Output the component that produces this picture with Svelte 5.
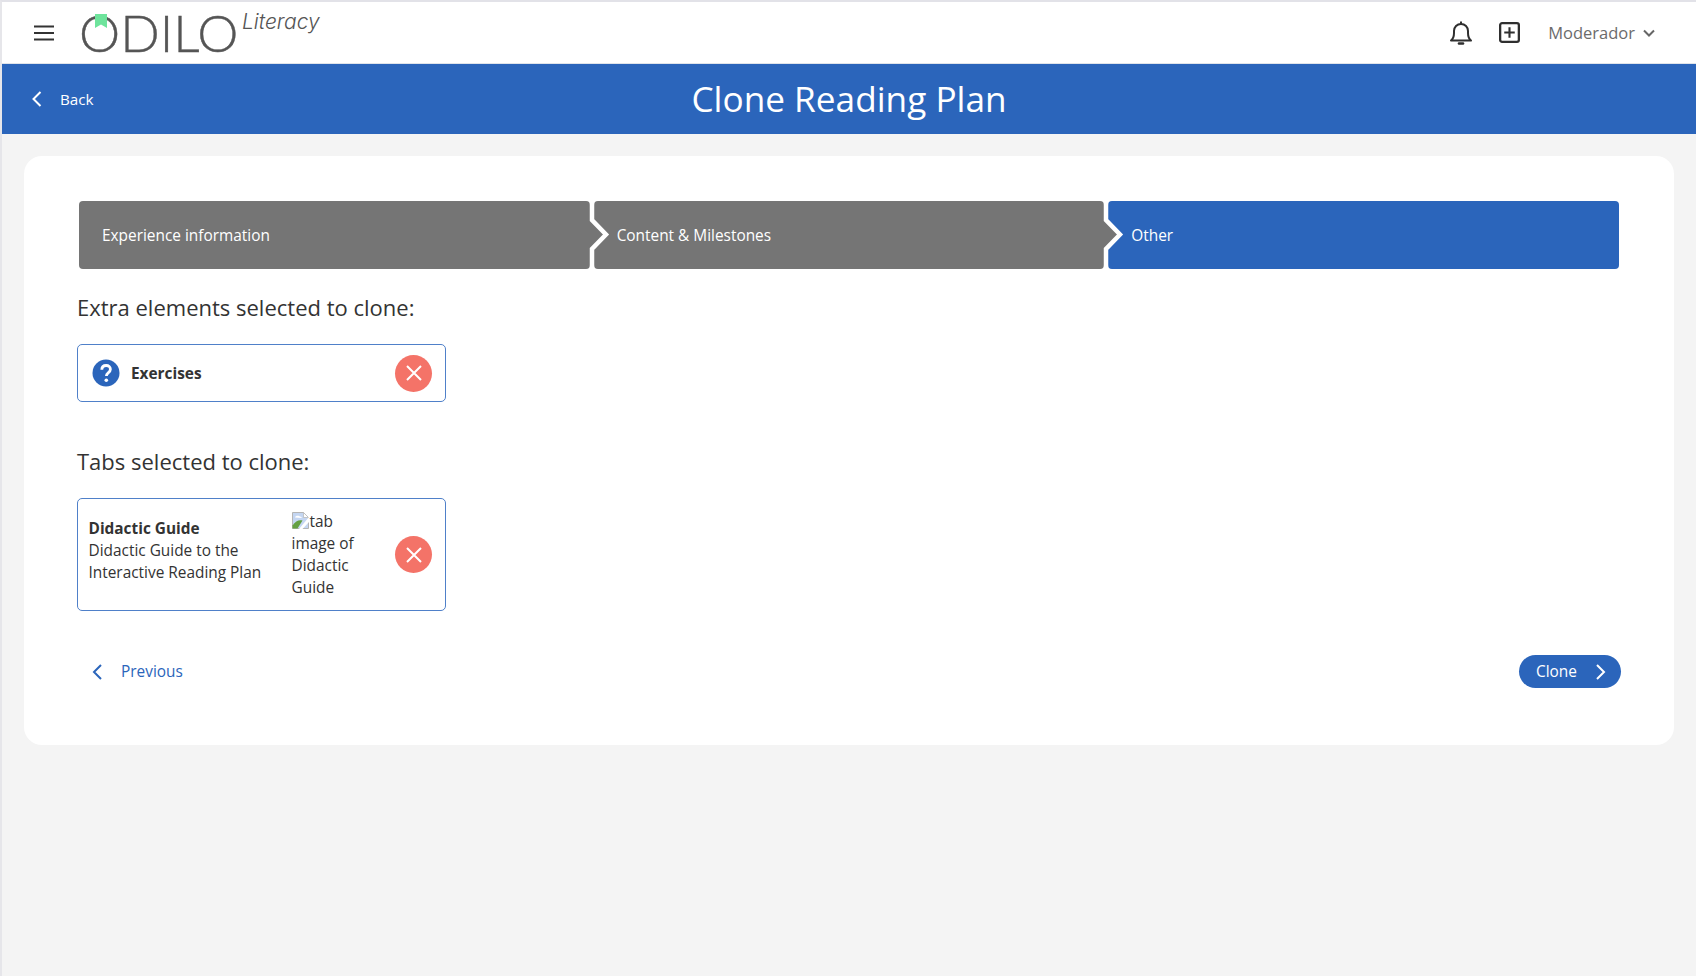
<script>
  const steps = [
    { label: 'Experience information', active: false },
    { label: 'Content & Milestones', active: false },
    { label: 'Other', active: true }
  ];
</script>

<div class="page">
  <header class="top">
    <button class="burger" aria-label="Menu">
      <svg width="22" height="18" viewBox="0 0 22 18"><path d="M1 2.500h20M1 9h20M1 15.500h20" stroke="#333" stroke-width="2.200" fill="none"/></svg>
    </button>
    <div class="logo">
      <span class="mark">ODILO</span>
      <svg class="ribbon" width="12" height="14" viewBox="0 0 12 14"><path d="M0 0h12v14l-6-3.500-6 3.500z" fill="#6ee49c"/></svg>
      <span class="lit">Literacy</span>
    </div>
    <div class="tools">
      <svg class="bell" width="24" height="26" viewBox="0 0 24 26" fill="none" stroke="#2f2f2f" stroke-width="2"><path d="M2 20.500c2.200-1.800 3-3.500 3-7.500V11c0-4 3-7 7-7s7 3 7 7v2c0 4 .8 5.700 3 7.500z" stroke-linejoin="round"/><path d="M12 1.500V4"/><path d="M10 23.500h4" stroke-width="2.600" stroke-linecap="round"/></svg>
      <svg class="plus" width="21" height="21" viewBox="0 0 22 22" fill="none" stroke="#2f2f2f"><rect x="1.200" y="1.200" width="19.600" height="19.600" rx="2" stroke-width="2.400"/><path d="M11 5.500v11M5.500 11h11" stroke-width="2.200"/></svg>
      <span class="user">Moderador</span>
      <svg width="12" height="8" viewBox="0 0 12 8" fill="none" stroke="#666" stroke-width="2"><path d="M1 1.500l5 5 5-5"/></svg>
    </div>
  </header>

  <div class="bar">
    <a class="back" href="#back">
      <svg width="11" height="16" viewBox="0 0 11 16" fill="none" stroke="#fff" stroke-width="2"><path d="M9.500 1L2.500 8l7 7"/></svg>
      <span>Back</span>
    </a>
    <h1>Clone Reading Plan</h1>
    <span></span>
  </div>

  <main class="card">
    <ol class="steps">
      {#each steps as s, i}
        <li class="step" class:active={s.active}>
          <span>{s.label}</span>
          {#if i < steps.length - 1}
            <svg class="arrow" width="24" height="68" viewBox="0 0 24 68"><path d="M0 15h5v4l14 14.500L5 48v5H0z" fill="#757575"/><path d="M5 0v19l14 14.500L5 48v20" fill="none" stroke="#fff" stroke-width="4.500"/></svg>
          {/if}
        </li>
      {/each}
    </ol>

    <h2>Extra elements selected to clone:</h2>
    <div class="box small">
      <svg class="help" width="28" height="28" viewBox="0 0 28 28"><circle cx="14" cy="14" r="13.500" fill="#2b65bb"/><path d="M9.800 10.800c0-2.700 1.900-4.300 4.400-4.300 2.400 0 4.200 1.500 4.200 3.700 0 1.800-1 2.700-2.200 3.600-1.200.9-1.800 1.600-1.800 3.100" fill="none" stroke="#fff" stroke-width="2.800"/><circle cx="14.300" cy="21.300" r="1.800" fill="#fff"/></svg>
      <strong>Exercises</strong>
      <button class="remove" aria-label="Remove">
        <svg width="18" height="18" viewBox="0 0 18 18"><path d="M2 2l14 14M16 2L2 16" stroke="#fff" stroke-width="2" fill="none"/></svg>
      </button>
    </div>

    <h2 class="second">Tabs selected to clone:</h2>
    <div class="box tall">
      <div class="desc">
        <strong>Didactic Guide</strong>
        <span>Didactic Guide to the Interactive Reading Plan</span>
      </div>
      <div class="alt">
        <svg class="broken" width="17" height="17" viewBox="0 0 17 17"><path d="M.5.5h11l5 5v11H.5z" fill="#c4d6f2" stroke="#b5b5b5"/><path d="M11.500.5l5 5h-5z" fill="#fff" stroke="#b5b5b5" stroke-width=".7"/><path d="M3 5.500c0-2 4-2.500 5-1 1.500 0 2 1 1.500 1.500z" fill="#fff"/><path d="M.5 16.500v-3c3-4.500 6.500-6 10-5l-5 8z" fill="#64a042"/><path d="M17 5L7 17h3.500L17 10z" fill="#fff"/></svg>tab image of Didactic Guide
      </div>
      <button class="remove" aria-label="Remove">
        <svg width="18" height="18" viewBox="0 0 18 18"><path d="M2 2l14 14M16 2L2 16" stroke="#fff" stroke-width="2" fill="none"/></svg>
      </button>
    </div>

    <div class="nav">
      <a class="prev" href="#prev">
        <svg width="11" height="16" viewBox="0 0 11 16" fill="none" stroke="#2b65bb" stroke-width="2"><path d="M9 1L2 8l7 7"/></svg>
        <span>Previous</span>
      </a>
      <button class="clone">
        <span>Clone</span>
        <svg width="11" height="16" viewBox="0 0 11 16" fill="none" stroke="#fff" stroke-width="2"><path d="M2 1l7 7-7 7"/></svg>
      </button>
    </div>
  </main>
</div>

<style>
  :global(body) {
    margin: 0;
    background: #f4f4f4;
    font-family: "Open Sans", "Noto Sans", sans-serif;
    color: #333;
  }
  .page {
    box-sizing: border-box;
    height: 976px;
    overflow: hidden;
    border-top: 2px solid #e2e2e8;
    border-left: 2px solid #e6e6ea;
  }
  .top {
    height: 62px;
    box-sizing: border-box;
    background: #fff;
    border-bottom: 1px solid #e0e4ea;
    display: flex;
    align-items: center;
    padding: 0 17px 0 31px;
  }
  .burger {
    border: 0;
    background: none;
    padding: 0;
    width: 22px;
    height: 18px;
    display: flex;
  }
  .logo {
    position: relative;
    margin-left: 24px;
    width: 260px;
    height: 60px;
  }
  .mark {
    position: absolute;
    left: 0;
    top: -5px;
    font-family: Lato, sans-serif;
    font-weight: 300;
    font-size: 52px;
    line-height: 68px;
    color: #555;
    -webkit-text-stroke: 0.4px #555;
  }
  .ribbon {
    position: absolute;
    left: 16px;
    top: 11px;
  }
  .lit {
    position: absolute;
    left: 163px;
    top: 4px;
    font-family: Inter, sans-serif;
    font-style: italic;
    font-weight: 300;
    font-size: 21px;
    line-height: 30px;
    color: #555;
  }
  .tools {
    margin-left: auto;
    display: flex;
    align-items: center;
  }
  .plus {
    margin-left: 26px;
  }
  .user {
    margin-left: 28px;
    font-size: 16.500px;
    color: #6b6b6b;
  }
  .user + svg {
    margin-left: 8px;
    margin-right: 24px;
  }
  .bar {
    height: 70px;
    background: #2b65bb;
    display: grid;
    grid-template-columns: 1fr auto 1fr;
    align-items: center;
    color: #fff;
  }
  .back {
    display: flex;
    align-items: center;
    gap: 18px;
    padding-left: 29px;
    color: #fff;
    text-decoration: none;
    font-size: 15.200px;
  }
  h1 {
    margin: -2px 0 0;
    font-size: 35.200px;
    font-weight: 400;
    line-height: 46px;
  }
  .card {
    margin: 22px 22px 0 22px;
    background: #fff;
    border-radius: 18px;
    height: 589px;
    box-sizing: border-box;
    padding: 45px 53px 0;
  }
  .steps {
    list-style: none;
    margin: 0 2px;
    padding: 0;
    display: grid;
    grid-template-columns: repeat(3, 1fr);
    gap: 4px;
  }
  .step {
    position: relative;
    height: 68px;
    background: #757575;
    border-radius: 4px;
    color: #fff;
    display: flex;
    align-items: center;
    padding-left: 23px;
    font-size: 15.400px;
  }
  .step.active {
    background: #2b65bb;
  }
  .arrow {
    position: absolute;
    right: -21px;
    top: 0;
    z-index: 1;
  }
  h2 {
    margin: 22px 0 0;
    font-size: 22px;
    line-height: 32px;
    font-weight: 400;
  }
  h2.second {
    margin-top: 43px;
  }
  .box {
    width: 369px;
    box-sizing: border-box;
    border: 1.500px solid #4f80c9;
    border-radius: 5px;
    display: flex;
    align-items: center;
    margin-top: 21px;
  }
  .box.small {
    height: 58px;
    padding: 0 13px 0 14px;
    font-size: 15.400px;
  }
  .box.tall {
    height: 113px;
    padding: 0 13px 0 10.500px;
    font-size: 15.400px;
    line-height: 22px;
  }
  .help {
    flex: none;
  }
  .small strong {
    margin-left: 11px;
  }
  .remove {
    flex: none;
    margin-left: auto;
    width: 37px;
    height: 37px;
    border: 0;
    border-radius: 50%;
    background: #f47368;
    display: flex;
    align-items: center;
    justify-content: center;
    padding: 0;
  }
  .desc {
    width: 203px;
    flex: none;
    display: flex;
    flex-direction: column;
    margin-bottom: 8px;
  }
  .alt {
    width: 78px;
    margin-top: 0;
  }
  .broken {
    vertical-align: -2px;
    margin-right: 1px;
  }
  .nav {
    margin-top: 44px;
    display: flex;
    justify-content: space-between;
    align-items: center;
  }
  .prev {
    display: flex;
    align-items: center;
    gap: 18px;
    padding-left: 15px;
    color: #2b65bb;
    text-decoration: none;
    font-size: 15.400px;
  }
  .clone {
    height: 33px;
    width: 102px;
    border: 0;
    border-radius: 17px;
    background: #2b65bb;
    color: #fff;
    font: inherit;
    font-size: 15.400px;
    display: flex;
    align-items: center;
    justify-content: space-between;
    padding: 0 15px 0 17px;
  }
</style>
